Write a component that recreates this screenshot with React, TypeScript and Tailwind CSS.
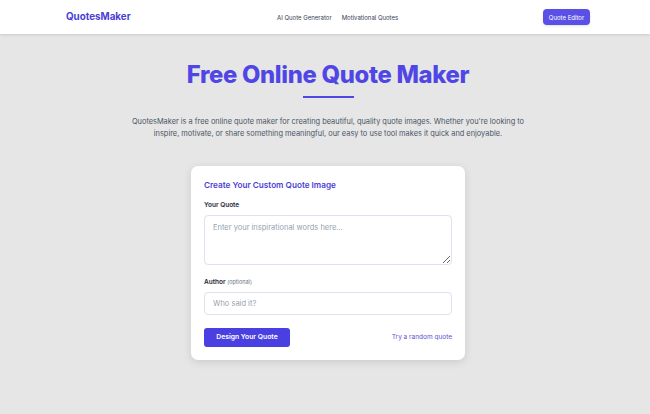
export default function App() {
  return (
    <div className="min-h-screen w-full bg-[#e6e6e6] font-['Inter',sans-serif] text-gray-800">
      {/* Header */}
      <header className="h-[34px] bg-white shadow-[0_1px_3px_rgba(0,0,0,0.12)]">
        <div className="flex h-full items-center pl-[66px] pr-[60px]">
          <span className="w-[211px] text-[9.8px] font-bold text-[#4a3fd6]">QuotesMaker</span>
          <nav className="flex items-center gap-[10px] text-[6px] text-gray-700">
            <a>AI Quote Generator</a>
            <a>Motivational Quotes</a>
          </nav>
          <button className="ml-auto h-[16px] w-[47px] rounded-[4px] bg-[#5a4fe6] text-[6px] text-white shadow-sm">
            Quote Editor
          </button>
        </div>
      </header>

      {/* Hero */}
      <main className="flex flex-col items-center pl-[6px]">
        <h1 className="mt-[26px] text-[23.8px] leading-[30px] font-extrabold tracking-[-0.3px] text-[#4f46e5]">
          Free Online Quote Maker
        </h1>
        <div className="mt-[6px] h-[2px] w-[51px] bg-[#4f46e5]" />
        <p className="mt-[18px] text-center text-[7.4px] leading-[12px] whitespace-nowrap text-gray-600">
          QuotesMaker is a free online quote maker for creating beautiful, quality quote images. Whether you're looking to
          <br />
          inspire, motivate, or share something meaningful, our easy to use tool makes it quick and enjoyable.
        </p>

        {/* Card */}
        <div className="mt-[26px] w-[274px] rounded-[7px] bg-white px-[13px] pt-[13px] pb-[13px] shadow-[0_2px_8px_rgba(0,0,0,0.12)]">
          <h2 className="text-[8.2px] leading-[12px] font-semibold text-[#4a3fd6]">Create Your Custom Quote Image</h2>

          <label className="mt-[9px] block text-[6.5px] leading-[10px] font-semibold text-gray-800">Your Quote</label>
          <textarea
            className="mt-[5px] block h-[50px] w-full resize-y rounded-[4px] border border-[#e0e0ee] px-[8px] py-[6px] text-[7.5px] placeholder:text-gray-400 outline-none"
            placeholder="Enter your inspirational words here..."
          />

          <label className="mt-[12px] block text-[6.5px] leading-[10px] font-semibold text-gray-800">
            Author <span className="text-[5.5px] font-normal text-gray-500">(optional)</span>
          </label>
          <input
            className="mt-[5px] block h-[23px] w-full rounded-[4px] border border-[#e0e0ee] px-[8px] text-[7.5px] placeholder:text-gray-400 outline-none"
            placeholder="Who said it?"
          />

          <div className="mt-[13px] flex items-center justify-between">
            <button className="h-[19px] w-[86px] rounded-[3px] bg-[#4a3fe0] text-[6.8px] font-semibold text-white">
              Design Your Quote
            </button>
            <a className="text-[6.5px] text-[#5a4fd6]">Try a random quote</a>
          </div>
        </div>
      </main>
    </div>
  );
}
